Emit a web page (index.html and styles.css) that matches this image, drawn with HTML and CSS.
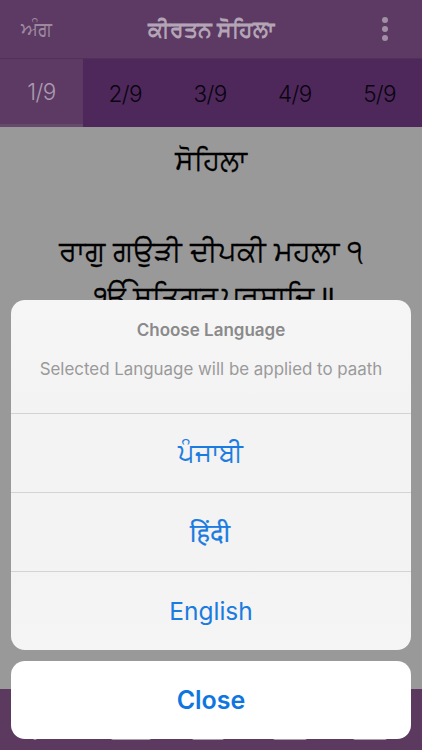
FILE: index.html
```html
<!DOCTYPE html>
<html lang="pa">
<head>
<meta charset="utf-8">
<title>ਕੀਰਤਨ ਸੋਹਿਲਾ</title>
<link rel="stylesheet" href="styles.css">
</head>
<body>
<div class="app">
  <header class="topbar">
    <span class="ang">ਅੰਗ</span>
    <h1 class="title">ਕੀਰਤਨ ਸੋਹਿਲਾ</h1>
    <span class="dots"><i></i><i></i><i></i></span>
  </header>
  <nav class="tabs">
    <span class="tab active">1/9</span>
    <span class="tab">2/9</span>
    <span class="tab">3/9</span>
    <span class="tab">4/9</span>
    <span class="tab">5/9</span>
  </nav>
  <main class="paath">
    <p class="head">ਸੋਹਿਲਾ</p>
    <p class="line raag">ਰਾਗੁ ਗਉੜੀ ਦੀਪਕੀ ਮਹਲਾ ੧</p>
    <p class="line mool">ੴ ਸਤਿਗੁਰ ਪ੍ਰਸਾਦਿ ॥</p>
  </main>
  <footer class="bottombar">
    <i class="mark m1"></i><i class="mark m2"></i><i class="mark m3"></i><i class="mark m4"></i><i class="mark m5"></i>
  </footer>
  <div class="overlay">
    <section class="sheet">
      <div class="sheet-head">
        <h2 class="sheet-title">Choose Language</h2>
        <p class="sheet-msg">Selected Language will be applied to paath</p>
      </div>
      <button class="option native">ਪੰਜਾਬੀ</button>
      <button class="option native">हिंदी</button>
      <button class="option">English</button>
    </section>
    <button class="close">Close</button>
  </div>
</div>
</body>
</html>
```
FILE: styles.css
```css
* { box-sizing: border-box; margin: 0; padding: 0; }
html, body { width: 422px; height: 750px; overflow: hidden; }
body { font-family: Inter, "Noto Sans", sans-serif; background: #999; }
.app { position: relative; width: 422px; height: 750px; display: flex; flex-direction: column; }
.topbar { height: 59px; background: #5c3a63; display: grid; grid-template-columns: 1fr auto 1fr; align-items: center; padding: 0 21px; border-bottom: 1px solid #4f3257; }
.ang { font-size: 20px; color: #9c889f; }
.title { font-size: 22px; font-weight: 600; color: #b3a5b6; }
.dots { justify-self: end; margin-right: 13px; display: flex; flex-direction: column; gap: 2.5px; }
.dots i { display: block; width: 6.5px; height: 6.5px; border-radius: 50%; background: #a18fa6; }
.tabs { height: 68px; display: flex; background: #4e285b; }
.tab { width: 85px; display: flex; align-items: center; justify-content: center; font-size: 22.5px; font-weight: 300; letter-spacing: -0.6px; color: #0a0410; }
.tab:first-child { width: 83px; }
.tab.active { background: #5c3a63; color: #ab9aaf; border-bottom: 3px solid #664a6c; }
.paath { height: 562px; background: #999; text-align: center; color: #000; overflow: hidden; padding-top: 13px; }
.head { font-size: 28px; line-height: 40px; -webkit-text-stroke: 0.3px #000; }
.line { font-size: 29px; line-height: 45px; -webkit-text-stroke: 0.3px #000; }
.raag { margin-top: 48px; }
.mool { word-spacing: -4px; padding-left: 7px; }
.bottombar { height: 61px; background: #5c3a60; display: flex; padding-top: 49px; }
.mark { display: block; height: 2px; background: #a9a0aa; border-radius: 0 0 2px 2px; }
.m1 { width: 4px; margin-left: 33px; }
.m2 { width: 40px; margin-left: 74px; }
.m3 { width: 32px; margin-left: 41px; }
.m4 { width: 34px; margin-left: 49px; }
.m5 { width: 34px; margin-left: 46px; }
.overlay { position: absolute; left: 11px; top: 300px; width: 400px; display: flex; flex-direction: column; gap: 11px; }
.sheet { background: linear-gradient(180deg, #f6f6f7, #f3f3f4 30%, #f3f3f4 75%, #f5f5f6); border-radius: 14px; overflow: hidden; }
.sheet-head { height: 113px; padding-top: 20px; text-align: center; }
.sheet-title { font-size: 17px; font-weight: 600; color: #8a8a8a; line-height: 20px; }
.sheet-msg { font-size: 16.9px; font-weight: 400; color: #9a9a9a; line-height: 20px; margin-top: 19px; }
.option { display: block; width: 100%; height: 79px; border: 0; border-top: 1px solid #d3d3d6; background: transparent; color: #1a7be0; font: 400 24.5px Inter, "Noto Sans", sans-serif; }
.native { font-size: 25.5px; -webkit-text-stroke: 0.2px #1a7be0; padding-right: 2px; }
.close { height: 78px; border: 0; border-radius: 14px; background: #fff; color: #0f76e0; font: 600 25px Inter, sans-serif; }
```
